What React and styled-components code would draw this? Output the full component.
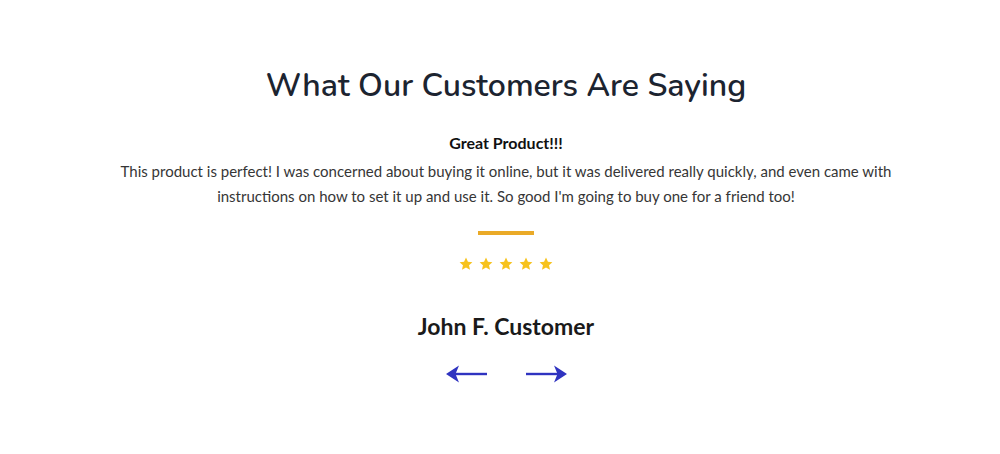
import React from 'react';
import styled, { createGlobalStyle } from 'styled-components';

const GlobalStyle = createGlobalStyle`
  html, body {
    margin: 0;
    padding: 0;
    background: #ffffff;
  }
`;

const Section = styled.section`
  display: flex;
  flex-direction: column;
  align-items: center;
  padding: 64px 0 0 12px;
  font-family: Lato, "Liberation Sans", sans-serif;
  color: #333333;
`;

const Heading = styled.h2`
  margin: 0;
  font-family: Nunito, "Noto Sans", sans-serif;
  font-weight: 600;
  font-size: 32px;
  line-height: 44px;
  color: #1c2430;
`;

const ReviewTitle = styled.h3`
  margin: 24px 0 0;
  font-size: 16px;
  font-weight: 700;
  line-height: 22px;
  color: #111111;
`;

const ReviewText = styled.p`
  margin: 5px 0 0;
  max-width: 780px;
  text-align: center;
  font-size: 15px;
  line-height: 25px;
  color: #363636;
`;

const Divider = styled.div`
  width: 56px;
  height: 4px;
  margin-top: 22px;
  background: #eaaa27;
`;

const Stars = styled.div`
  display: flex;
  gap: 6px;
  margin-top: 22px;
`;

const Name = styled.h4`
  margin: 40px 0 0;
  font-size: 23px;
  font-weight: 700;
  line-height: 30px;
  color: #1a1a1a;
`;

const Controls = styled.div`
  display: flex;
  gap: 39px;
  margin-top: 23px;
`;

const ArrowButton = styled.button`
  display: flex;
  padding: 0;
  border: none;
  background: none;
  cursor: pointer;
`;

const Star = () => (
  <svg width="14" height="14" viewBox="0 0 24 24">
    <path
      d="M12 1l3.3 7.1 7.7.8-5.8 5.2 1.7 7.7L12 17.9l-6.9 3.9 1.7-7.7L1 8.9l7.7-.8z"
      fill="#f7c21b"
    />
  </svg>
);

const Arrow = ({ dir }) => (
  <svg width="41" height="20" viewBox="0 0 41 20">
    {dir === 'left' ? (
      <g fill="#2f33c0">
        <rect x="6" y="8.8" width="35" height="2.4" />
        <path d="M0 10L13 1.5 9.5 10 13 18.5z" />
      </g>
    ) : (
      <g fill="#2f33c0">
        <rect x="0" y="8.8" width="35" height="2.4" />
        <path d="M41 10L28 1.5 31.5 10 28 18.5z" />
      </g>
    )}
  </svg>
);

export default function App() {
  return (
    <>
      <GlobalStyle />
      <Section>
        <Heading>What Our Customers Are Saying</Heading>
        <ReviewTitle>Great Product!!!</ReviewTitle>
        <ReviewText>
          This product is perfect! I was concerned about buying it online, but it was delivered
          really quickly, and even came with instructions on how to set it up and use it. So good
          I'm going to buy one for a friend too!
        </ReviewText>
        <Divider />
        <Stars>
          {[0, 1, 2, 3, 4].map((i) => (
            <Star key={i} />
          ))}
        </Stars>
        <Name>John F. Customer</Name>
        <Controls>
          <ArrowButton aria-label="Previous">
            <Arrow dir="left" />
          </ArrowButton>
          <ArrowButton aria-label="Next">
            <Arrow dir="right" />
          </ArrowButton>
        </Controls>
      </Section>
    </>
  );
}
